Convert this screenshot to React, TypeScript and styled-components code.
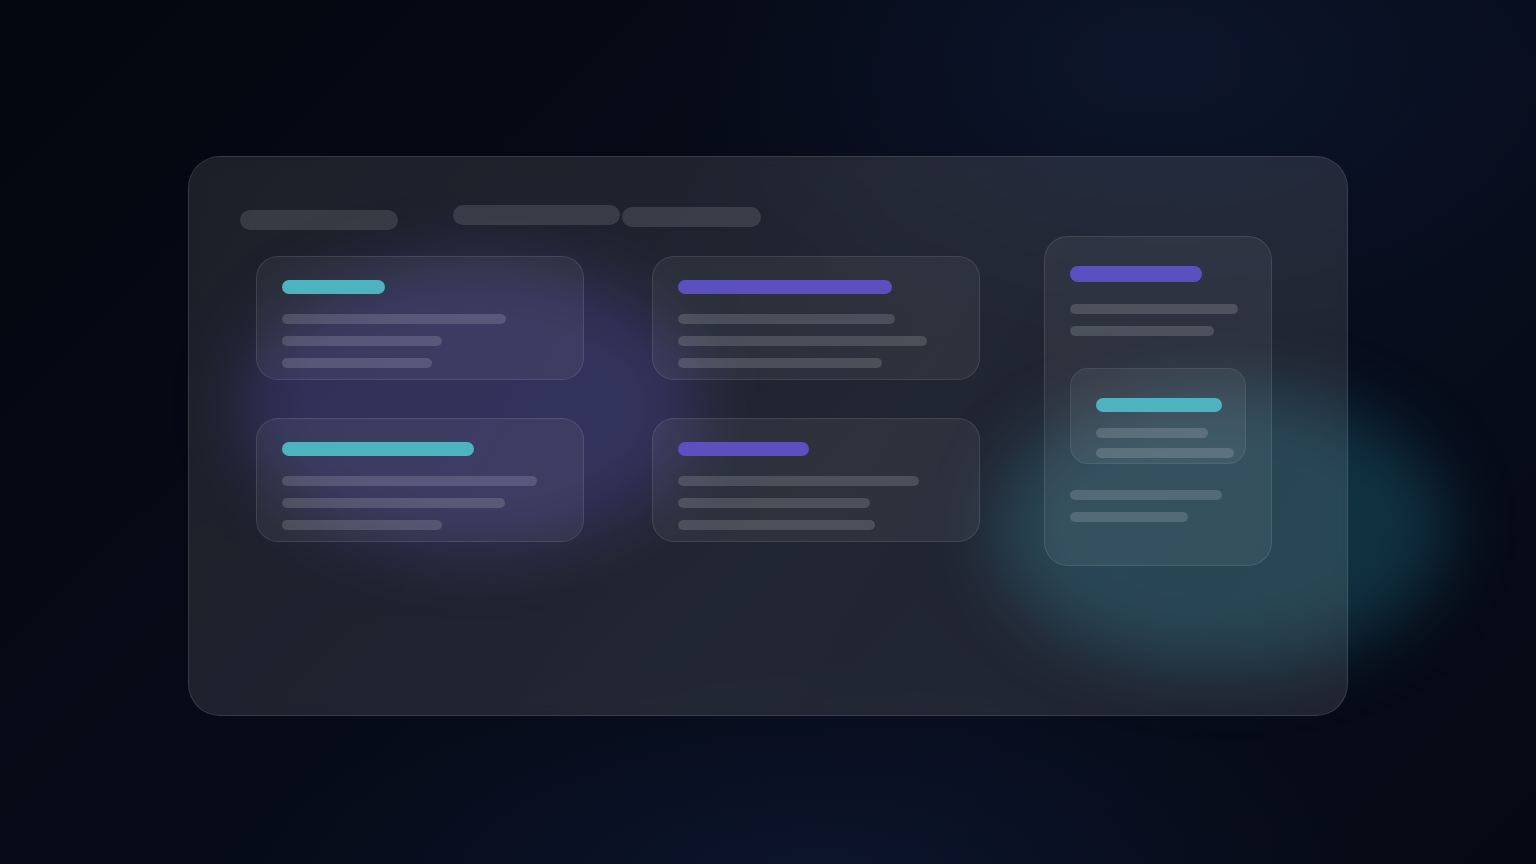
import React from 'react'
import styled, { createGlobalStyle } from 'styled-components'

const GlobalStyle = createGlobalStyle`
  * {
    box-sizing: border-box;
  }

  html,
  body {
    margin: 0;
    padding: 0;
    width: 100%;
    height: 100%;
    background: #050914;
    font-family: Inter, 'Liberation Sans', sans-serif;
  }
`

const Page = styled.div`
  position: relative;
  width: 100vw;
  height: 100vh;
  overflow: hidden;
  display: flex;
  justify-content: center;
  align-items: flex-start;
  padding-top: 156px;
  background:
    radial-gradient(ellipse 700px 420px at 1150px 60px, rgba(18, 30, 60, 0.5), transparent 70%),
    radial-gradient(ellipse 800px 300px at 820px 880px, rgba(16, 26, 56, 0.55), transparent 70%),
    linear-gradient(135deg, #04070f 0%, #060b18 45%, #070d1c 70%, #050913 100%);
`

const Blob = styled.div<{ $x: number; $y: number; $w: number; $h: number; $color: string }>`
  position: absolute;
  left: ${p => p.$x - p.$w / 2}px;
  top: ${p => p.$y - p.$h / 2}px;
  width: ${p => p.$w}px;
  height: ${p => p.$h}px;
  border-radius: 50%;
  background: ${p => p.$color};
  filter: blur(32px);
  z-index: 0;
`

const Panel = styled.div`
  position: relative;
  z-index: 1;
  width: 1160px;
  height: 560px;
  border-radius: 32px;
  border: 1px solid rgba(255, 255, 255, 0.11);
  background: linear-gradient(
    120deg,
    rgba(255, 255, 255, 0.095) 0%,
    rgba(255, 255, 255, 0.11) 50%,
    rgba(255, 255, 255, 0.1) 100%
  );
  backdrop-filter: blur(6px);
  padding: 48px 51px;
`

const Header = styled.div`
  display: flex;
  align-items: flex-start;
  height: 25px;
`

const HeaderPill = styled.div<{ $w: number; $top: number; $left: number }>`
  width: ${p => p.$w}px;
  height: 20px;
  margin-top: ${p => p.$top}px;
  margin-left: ${p => p.$left}px;
  border-radius: 10px;
  background: rgba(255, 255, 255, 0.12);
`

const Body = styled.div`
  display: flex;
  align-items: flex-start;
  margin-top: 6px;
  padding-left: 16px;
`

const CardGrid = styled.div`
  display: grid;
  grid-template-columns: 328px 328px;
  column-gap: 68px;
  row-gap: 38px;
  margin-top: 20px;
`

const Card = styled.div`
  width: 328px;
  height: 124px;
  border-radius: 22px;
  border: 1px solid rgba(255, 255, 255, 0.1);
  background: rgba(255, 255, 255, 0.055);
  padding: 23px 25px;
  display: flex;
  flex-direction: column;
`

const SideCard = styled.div`
  width: 228px;
  height: 330px;
  margin-left: 64px;
  border-radius: 24px;
  border: 1px solid rgba(255, 255, 255, 0.1);
  background: rgba(255, 255, 255, 0.06);
  padding: 29px 25px;
  display: flex;
  flex-direction: column;
`

const InnerCard = styled.div`
  width: 176px;
  height: 96px;
  margin-top: 32px;
  margin-bottom: 26px;
  border-radius: 18px;
  border: 1px solid rgba(255, 255, 255, 0.08);
  background: rgba(255, 255, 255, 0.06);
  padding: 29px 0 0 25px;
  display: flex;
  flex-direction: column;
`

const Title = styled.div<{ $w: number; $tone: 'teal' | 'violet'; $h?: number; $gap?: number }>`
  width: ${p => p.$w}px;
  height: ${p => p.$h ?? 14}px;
  flex-shrink: 0;
  margin-bottom: ${p => p.$gap ?? 20}px;
  border-radius: 8px;
  background: ${p => (p.$tone === 'teal' ? '#4db4bf' : '#5a50c0')};
`

const Line = styled.div<{ $w: number; $gap?: number }>`
  width: ${p => p.$w}px;
  height: 10px;
  flex-shrink: 0;
  margin-top: ${p => p.$gap ?? 0}px;
  border-radius: 5px;
  background: rgba(255, 255, 255, 0.15);
`

interface CardData {
  tone: 'teal' | 'violet'
  title: number
  lines: number[]
}

const cards: CardData[] = [
  { tone: 'teal', title: 103, lines: [224, 160, 150] },
  { tone: 'violet', title: 214, lines: [217, 249, 204] },
  { tone: 'teal', title: 192, lines: [255, 223, 160] },
  { tone: 'violet', title: 131, lines: [241, 192, 197] },
]

const App: React.FC = () => (
  <>
    <GlobalStyle />
    <Page>
      <Blob $x={470} $y={405} $w={460} $h={290} $color="rgba(66, 58, 170, 0.34)" />
      <Blob $x={1222} $y={528} $w={450} $h={280} $color="rgba(26, 86, 104, 0.5)" />
      <Panel>
        <Header>
          <HeaderPill $w={158} $top={5} $left={0} />
          <HeaderPill $w={167} $top={0} $left={55} />
          <HeaderPill $w={139} $top={2} $left={2} />
        </Header>
        <Body>
          <CardGrid>
            {cards.map((card, i) => (
              <Card key={i}>
                <Title $w={card.title} $tone={card.tone} />
                {card.lines.map((w, j) => (
                  <Line key={j} $w={w} $gap={j === 0 ? 0 : 12} />
                ))}
              </Card>
            ))}
          </CardGrid>
          <SideCard>
            <Title $w={132} $tone="violet" $h={16} $gap={22} />
            <Line $w={168} />
            <Line $w={144} $gap={12} />
            <InnerCard>
              <Title $w={126} $tone="teal" $gap={16} />
              <Line $w={112} />
              <Line $w={138} $gap={10} />
            </InnerCard>
            <Line $w={152} />
            <Line $w={118} $gap={12} />
          </SideCard>
        </Body>
      </Panel>
    </Page>
  </>
)

export default App
